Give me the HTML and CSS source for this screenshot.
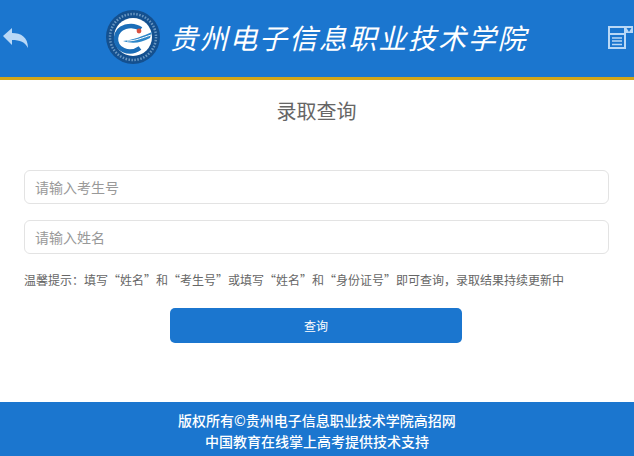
FILE: index.html
```html
<!DOCTYPE html>
<html lang="zh-CN">
<head>
    <meta charset="UTF-8">
    <meta name="viewport" content="width=device-width, initial-scale=1.0">
    <title>录取查询</title>
    <link rel="stylesheet" href="styles.css">
</head>
<body>
    <header class="header">
        <svg class="back-icon" viewBox="0 0 25 21" width="25" height="21">
            <path d="M0 9 L9 1 V6 C18 6 25 10 25 21 C22 15 17 13 9 13 V18 Z" fill="#b9d8f6"/>
        </svg>
        <div class="brand">
            <svg class="logo" viewBox="0 0 56 56" width="56" height="56">
                <circle cx="28" cy="28" r="27" fill="#14508f"/>
                <circle cx="28" cy="28" r="23" fill="none" stroke="#6a97c2" stroke-width="2.5" stroke-dasharray="1.5 1.5"/>
                <circle cx="28" cy="28" r="19" fill="#fff"/>
                <path d="M36 20 C27 14 12 17 11 29 C10 40 24 47 35 39" fill="none" stroke="#1a6db8" stroke-width="4.5"/>
                <path d="M18 32 C28 31 38 27 47 23 L45 29 C36 34 27 35 18 32 Z" fill="#2b86c9"/>
                <path d="M22 32 C30 32 37 29 46 26" fill="none" stroke="#fff" stroke-width="1"/>
                <circle cx="34" cy="22" r="2.4" fill="#d9503f"/>
            </svg>
            <span class="school-name">贵州电子信息职业技术学院</span>
        </div>
        <svg class="menu-icon" viewBox="0 0 25 23" width="25" height="23">
            <g fill="none" stroke="#b9d8f6" stroke-width="2">
                <rect x="1" y="1" width="16" height="7"/>
                <rect x="1" y="8" width="16" height="14"/>
                <path d="M4 12 H14 M4 15 H14 M4 18.5 H14" stroke-width="1.4"/>
            </g>
            <path d="M17 0 H25 V7 H17 Z" fill="#b9d8f6"/>
            <path d="M18.5 2 H23.5 L21 6 Z" fill="#1b76cf"/>
        </svg>
    </header>

    <main class="main">
        <h1 class="page-title">录取查询</h1>
        <form class="query-form">
            <input class="field" type="text" placeholder="请输入考生号">
            <input class="field" type="text" placeholder="请输入姓名">
            <p class="hint">温馨提示：填写“姓名”和“考生号”或填写“姓名”和“身份证号”即可查询，录取结果持续更新中</p>
            <button class="submit" type="button">查询</button>
        </form>
    </main>

    <footer class="footer">
        <p>版权所有©贵州电子信息职业技术学院高招网</p>
        <p>中国教育在线掌上高考提供技术支持</p>
    </footer>
</body>
</html>
```

FILE: styles.css
```css
* {
    box-sizing: border-box;
}
body {
    margin: 0;
    min-height: 100vh;
    display: flex;
    flex-direction: column;
    font-family: "Noto Sans CJK SC", "Liberation Sans", sans-serif;
    background-color: #fff;
    color: #555;
}
.header {
    height: 80px;
    padding: 0 1px 3px 3px;
    display: flex;
    justify-content: space-between;
    align-items: center;
    background-color: #1b76cf;
    border-bottom: 3px solid #d2a618;
}
.brand {
    margin-right: 4px;
    display: flex;
    align-items: center;
    gap: 9px;
}
.school-name {
    font-size: 28px;
    font-style: italic;
    letter-spacing: 1.8px;
    color: #fff;
    white-space: nowrap;
}
.main {
    flex: 1;
    padding: 0 25px 0 24px;
}
.page-title {
    margin: 17px 0 0;
    font-size: 20px;
    font-weight: 400;
    line-height: 27px;
    text-align: center;
    color: #666;
}
.query-form {
    margin-top: 46px;
    display: flex;
    flex-direction: column;
}
.field {
    height: 34px;
    margin-bottom: 16px;
    padding: 0 10px;
    border: 1px solid #e3e3e3;
    border-radius: 6px;
    font: inherit;
    font-size: 14px;
}
.field::placeholder {
    color: #999;
}
.hint {
    margin: 0;
    font-size: 12px;
    line-height: 20px;
    color: #666;
}
.submit {
    width: 292px;
    height: 35px;
    margin: 18px 0 0 146px;
    border: none;
    border-radius: 5px;
    background-color: #1b76cf;
    color: #fff;
    font: inherit;
    font-size: 12px;
}
.footer {
    height: 54px;
    padding-top: 8px;
    background-color: #1b76cf;
    color: #fff;
    text-align: center;
    font-size: 14px;
    font-weight: 500;
    line-height: 21px;
}
.footer p {
    margin: 0;
}
```
